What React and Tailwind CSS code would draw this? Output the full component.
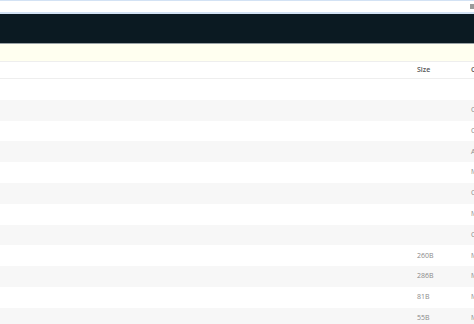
import React from 'react';

const rows = [
  { size: '', msg: '' },
  { size: '', msg: 'Commit' },
  { size: '', msg: 'Commit' },
  { size: '', msg: 'Add' },
  { size: '', msg: 'Merge' },
  { size: '', msg: 'Commit' },
  { size: '', msg: 'Merge' },
  { size: '', msg: 'Commit' },
  { size: '260B', msg: 'Merge' },
  { size: '286B', msg: 'Merge' },
  { size: '81B', msg: 'Merge' },
  { size: '55B', msg: 'Merge' },
];

export default function App() {
  return (
    <div className="w-[474px] h-[324px] overflow-hidden bg-white" style={{ fontFamily: '"Open Sans", sans-serif' }}>
      {/* barra de busqueda */}
      <div className="h-[14px] border-t border-b-2 border-[#d3e2f4] bg-white flex items-center justify-end">
        <div className="w-[4px] h-[5px] bg-[#9a9a9a]"></div>
      </div>

      {/* cabecera oscura */}
      <div className="h-[29px] bg-[#0b1a22]"></div>
      <div className="h-px bg-[#9aa2a6]"></div>

      {/* aviso */}
      <div className="h-[18px] bg-[#fffff0] border-b border-[#eeeeee]"></div>

      {/* tabla */}
      <div className="flex h-[17px] items-center border-b border-[#eeeeee] text-[7px] font-semibold text-[#555] whitespace-nowrap">
        <div className="w-[417px] shrink-0"></div>
        <div className="w-[54px] shrink-0">Size</div>
        <div className="shrink-0">Commit</div>
      </div>
      {rows.map((r, i) => (
        <div
          key={i}
          className={`flex h-[20.8px] items-center text-[7px] text-[#8a8a8a] whitespace-nowrap ${i % 2 === 1 ? 'bg-[#f7f7f7]' : 'bg-white'}`}
        >
          <div className="w-[417px] shrink-0"></div>
          <div className="w-[54px] shrink-0">{r.size}</div>
          <div className="shrink-0">{r.msg}</div>
        </div>
      ))}
    </div>
  );
}
